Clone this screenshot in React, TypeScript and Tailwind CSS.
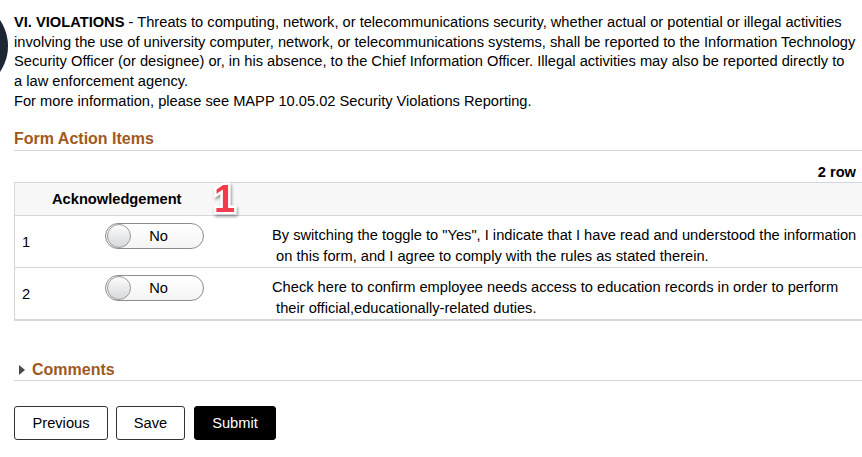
const rows = [
  {
    id: 1,
    lines: [
      'By switching the toggle to "Yes", I indicate that I have read and understood the information',
      "\u00a0on this form, and I agree to comply with the rules as stated therein.",
    ],
  },
  {
    id: 2,
    lines: [
      "Check here to confirm employee needs access to education records in order to perform",
      "\u00a0their official,educationally-related duties.",
    ],
  },
]

function Toggle() {
  return (
    <div className="relative flex h-[26px] w-[99px] items-center rounded-full border border-[#8c8c8c] bg-gradient-to-b from-white to-[#f4f4f4]">
      <div className="absolute left-[1px] top-[0px] h-[24px] w-[24px] rounded-full border border-[#9a9a9a] bg-gradient-to-b from-[#fdfdfd] to-[#d6d8dc]" />
      <span className="w-full pl-[8px] text-center leading-[20px]">No</span>
    </div>
  )
}

function SectionHeading({ children }: { children: React.ReactNode }) {
  return (
    <div className="border-b border-[#d3d7dc] pt-[3px] pb-[1px] text-[16px] font-bold leading-[20px] text-[#9e5a1c]">
      {children}
    </div>
  )
}

export default function App() {
  return (
    <div className="relative h-[457px] w-[862px] overflow-hidden bg-white font-['Liberation_Sans',Arial,sans-serif] text-[14.67px] text-black">
      {/* dark blob peeking in from the left edge */}
      <div className="absolute left-[-84px] top-[0px] h-[92px] w-[92px] rounded-full bg-[#1c2733]" />

      <div className="h-[112px] whitespace-nowrap pl-[14px] pt-[13px] leading-[19.5px]">
        <p>
          <b>VI. VIOLATIONS</b> - Threats to computing, network, or telecommunications security, whether actual or potential or illegal activities
          <br />
          involving the use of university computer, network, or telecommunications systems, shall be reported to the Information Technology
          <br />
          Security Officer (or designee) or, in his absence, to the Chief Information Officer. Illegal activities may also be reported directly to
          <br />
          a law enforcement agency.
        </p>
        <p className="mt-[1px]">For more information, please see MAPP 10.05.02 Security Violations Reporting.</p>
      </div>

      <div className="mt-[14px] pl-[14px]">
        <SectionHeading>Form Action Items</SectionHeading>

        <div className="h-[31px] pr-[6px] pt-[12px] text-right font-bold leading-[18px]">2 row</div>

        <div className="relative border-l border-t border-b-2 border-[#d3d7dc]">
          <div className="flex h-[33px] items-center border-b border-[#d3d7dc] bg-[#f7f7f7] pl-[37px] font-bold">
            Acknowledgement
          </div>

          {rows.map((row, i) => (
            <div
              key={row.id}
              className={
                i < rows.length - 1
                  ? "flex h-[52px] border-b border-[#d3d7dc]"
                  : "flex h-[51px]"
              }
            >
              <div className="w-[90px] self-center pl-[7px]">{row.id}</div>
              <div className="pt-[7px]">
                <Toggle />
              </div>
              <div className="ml-[68px] whitespace-nowrap pt-[9px] leading-[21px]">
                {row.lines[0]}
                <br />
                {row.lines[1]}
              </div>
            </div>
          ))}

          {/* red step annotation */}
          <span className="absolute left-[199px] top-[-4px] text-[38px] font-bold leading-[40px] text-[#f23b4c] [-webkit-text-stroke:5px_white] [paint-order:stroke_fill] drop-shadow-[1px_2px_1.5px_rgba(0,0,0,0.4)]">
            1
          </span>
        </div>

        <div className="mt-[39px] flex items-center border-b border-[#d3d7dc] text-[16px] font-bold leading-[20px] text-[#9e5a1c]">
          <span className="ml-[5px] mr-[7px] h-0 w-0 border-y-[5px] border-l-[6px] border-y-transparent border-l-[#4a4a4a]" />
          Comments
        </div>

        <div className="mt-[25px] flex gap-[8px]">
          <button className="h-[34px] w-[94px] rounded-[3px] border border-[#333] bg-white">Previous</button>
          <button className="h-[34px] w-[69px] rounded-[3px] border border-[#333] bg-white">Save</button>
          <button className="ml-[1px] h-[34px] w-[82px] rounded-[3px] border border-black bg-black text-white">Submit</button>
        </div>
      </div>
    </div>
  )
}
